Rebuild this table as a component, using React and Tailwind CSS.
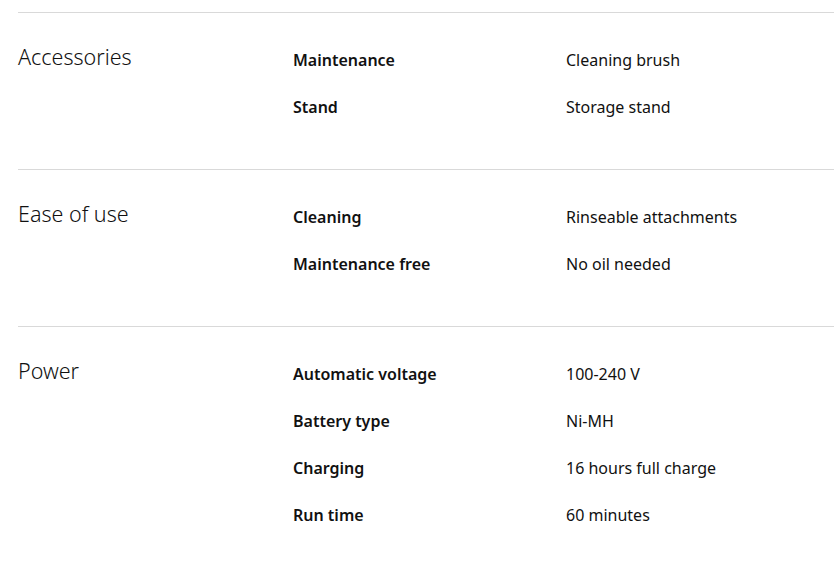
import React from 'react';

const sections = [
  {
    title: 'Accessories',
    rows: [
      ['Maintenance', 'Cleaning brush'],
      ['Stand', 'Storage stand'],
    ],
  },
  {
    title: 'Ease of use',
    rows: [
      ['Cleaning', 'Rinseable attachments'],
      ['Maintenance free', 'No oil needed'],
    ],
  },
  {
    title: 'Power',
    rows: [
      ['Automatic voltage', '100-240 V'],
      ['Battery type', 'Ni-MH'],
      ['Charging', '16 hours full charge'],
      ['Run time', '60 minutes'],
    ],
  },
];

const App = () => {
  return (
    <div className="min-h-screen bg-white pt-3 pl-[18px] text-[#111] font-['Noto_Sans',sans-serif]">
      {sections.map((section) => (
        <div key={section.title} className="flex border-t border-[#d9d9d9] pt-[23px] pb-[39px]">
          <h2 className="w-[275px] shrink-0 text-[21.5px] font-light leading-[42px]">
            {section.title}
          </h2>
          <div className="flex flex-col">
            {section.rows.map(([label, value]) => (
              <div key={label} className="flex h-[47px] items-center text-[16px]">
                <span className="w-[273px] shrink-0 font-semibold">{label}</span>
                <span>{value}</span>
              </div>
            ))}
          </div>
        </div>
      ))}
    </div>
  );
};

export default App;
